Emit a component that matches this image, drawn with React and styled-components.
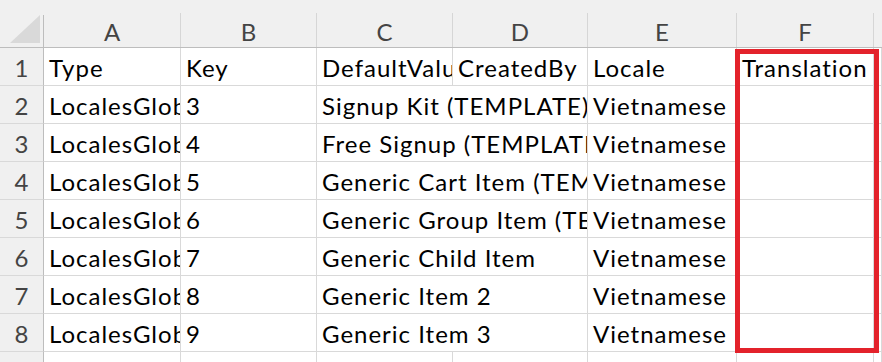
import React from "react";
import styled, { createGlobalStyle } from "styled-components";

const Global = createGlobalStyle`
  html, body { margin: 0; padding: 0; background: #fff; overflow: hidden; }
  body { font-family: "Lato", "Open Sans", sans-serif; }
`;

const COLS = "44px 137px 136px 136px 135px 149px 137px 1fr";
const GRID = "#d9d9d9";
const HEAD_LINE = "#bdbdbd";

const Sheet = styled.div`
  position: relative;
  width: 882px;
  height: 362px;
  overflow: hidden;
  display: flex;
  flex-direction: column;
`;

const HeaderRow = styled.div`
  display: grid;
  grid-template-columns: ${COLS};
  height: 50px;
  box-sizing: border-box;
  background: #f0f0f0;
  border-bottom: 1px solid ${HEAD_LINE};
`;

const Corner = styled.div`
  display: flex;
  align-items: flex-end;
  justify-content: flex-end;
  padding: 0 3px 4px 0;
  border-right: 1px solid ${HEAD_LINE};
  margin-top: 15px;
  svg { display: block; }
`;

const ColHead = styled.div`
  align-self: end;
  height: 34px;
  box-sizing: border-box;
  border-right: 1px solid ${(p) => (p.$last ? "transparent" : "#d6d6d6")};
  display: flex;
  align-items: center;
  justify-content: center;
  font-size: 24px;
  color: #444;
  padding-top: 2px;
`;

const Row = styled.div`
  display: grid;
  grid-template-columns: ${COLS};
  height: 38px;
  flex: none;
`;

const RowHead = styled.div`
  background: #f0f0f0;
  border-right: 1px solid ${HEAD_LINE};
  border-bottom: 1px solid ${GRID};
  display: flex;
  align-items: center;
  justify-content: center;
  font-size: 24px;
  color: #444;
  padding-top: 1px;
`;

const Cell = styled.div`
  grid-column: span ${(p) => p.$span || 1};
  border-right: 1px solid ${GRID};
  border-bottom: 1px solid ${GRID};
  display: flex;
  align-items: center;
  padding: 2px 0 0 5px;
  font-size: 24px;
  letter-spacing: 1px;
  color: #000;
  white-space: nowrap;
  overflow: hidden;
  min-width: 0;
`;

const Highlight = styled.div`
  position: absolute;
  left: 735px;
  top: 49px;
  width: 144px;
  height: 304px;
  box-sizing: border-box;
  border: 5px solid #e3222b;
  pointer-events: none;
`;

const rows = [
  ["Type", "Key", "DefaultValue", "CreatedBy", "Locale", "Translation"],
  ["LocalesGlobal", "3", "Signup Kit (TEMPLATE)", null, "Vietnamese", ""],
  ["LocalesGlobal", "4", "Free Signup (TEMPLATE)", null, "Vietnamese", ""],
  ["LocalesGlobal", "5", "Generic Cart Item (TEMPLATE)", null, "Vietnamese", ""],
  ["LocalesGlobal", "6", "Generic Group Item (TEMPLATE)", null, "Vietnamese", ""],
  ["LocalesGlobal", "7", "Generic Child Item", null, "Vietnamese", ""],
  ["LocalesGlobal", "8", "Generic Item 2", null, "Vietnamese", ""],
  ["LocalesGlobal", "9", "Generic Item 3", null, "Vietnamese", ""],
  ["", "", "", "", "", ""],
];

export default function App() {
  return (
    <>
      <Global />
      <Sheet>
        <HeaderRow>
          <Corner>
            <svg width="30" height="28" viewBox="0 0 30 28">
              <polygon points="30,0 30,28 0,28" fill="#d9d9d9" />
            </svg>
          </Corner>
          {["A", "B", "C", "D", "E", "F"].map((c) => (
            <ColHead key={c}>{c}</ColHead>
          ))}
          <ColHead $last />
        </HeaderRow>
        {rows.map((r, i) => (
          <Row key={i}>
            <RowHead>{i < 8 ? i + 1 : ""}</RowHead>
            <Cell>{r[0]}</Cell>
            <Cell>{r[1]}</Cell>
            {r[3] === null ? (
              <Cell $span={2}>{r[2]}</Cell>
            ) : (
              <>
                <Cell>{r[2]}</Cell>
                <Cell>{r[3]}</Cell>
              </>
            )}
            <Cell>{r[4]}</Cell>
            <Cell>{r[5]}</Cell>
            <Cell />
          </Row>
        ))}
        <Highlight />
      </Sheet>
    </>
  );
}
